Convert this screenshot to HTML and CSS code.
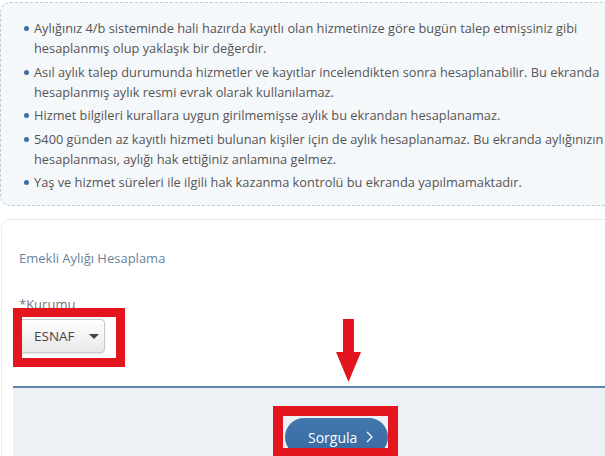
FILE: index.html
```html
<!DOCTYPE html>
<html lang="tr">
<head>
<meta charset="utf-8">
<title>Emekli Aylığı Hesaplama</title>
<link rel="stylesheet" href="styles.css">
</head>
<body>
<div class="page">
  <div class="info">
    <ul class="notes">
      <li>Aylığınız 4/b sisteminde hali hazırda kayıtlı olan hizmetinize göre bugün talep etmişsiniz gibi<br>hesaplanmış olup yaklaşık bir değerdir.</li>
      <li>Asıl aylık talep durumunda hizmetler ve kayıtlar incelendikten sonra hesaplanabilir. Bu ekranda<br>hesaplanmış aylık resmi evrak olarak kullanılamaz.</li>
      <li>Hizmet bilgileri kurallara uygun girilmemişse aylık bu ekrandan hesaplanamaz.</li>
      <li>5400 günden az kayıtlı hizmeti bulunan kişiler için de aylık hesaplanamaz. Bu ekranda aylığınızın<br>hesaplanması, aylığı hak ettiğiniz anlamına gelmez.</li>
      <li>Yaş ve hizmet süreleri ile ilgili hak kazanma kontrolü bu ekranda yapılmamaktadır.</li>
    </ul>
  </div>

  <div class="card">
    <div class="card-body">
      <h2 class="title">Emekli Aylığı Hesaplama</h2>
      <label class="field-label">*Kurumu</label>
      <div class="select">
        <span class="select-value">ESNAF</span>
        <span class="caret"></span>
      </div>
    </div>
    <div class="footer">
      <button class="btn">Sorgula
        <svg class="chev" width="7" height="12" viewBox="0 0 7 12"><path d="M1 1 L6 6 L1 11" fill="none" stroke="#fff" stroke-width="1.2"/></svg>
      </button>
    </div>
  </div>

  <div class="mark mark-select"></div>
  <div class="mark mark-btn"></div>
  <svg class="arrow" width="26" height="64" viewBox="0 0 26 64"><path d="M7 0 H18 V33 H25 L12.5 63 L0 33 H7 Z" fill="#e3161f"/></svg>
</div>
</body>
</html>
```

FILE: styles.css
```css
html, body {
  margin: 0;
  padding: 0;
  overflow: hidden;
  background: #fff;
}
body {
  font-family: "Open Sans", "Liberation Sans", sans-serif;
  width: 605px;
  height: 456px;
}
.page {
  position: relative;
  width: 605px;
  height: 456px;
  overflow: hidden;
}
.info {
  margin-top: 2px;
  width: 720px;
  border: 1px dashed #c3cad2;
  border-radius: 10px;
  background: #f5f8fb;
  padding: 15px 0 13px 0;
}
.notes {
  list-style: none;
  margin: 0;
  padding: 0 0 0 17px;
}
.notes li {
  position: relative;
  padding-left: 16px;
  font-size: 12.8px;
  line-height: 20px;
  color: #555;
  white-space: nowrap;
  margin-bottom: 3.6px;
}
.notes li:last-child { margin-bottom: 0; }
.notes li::before {
  content: "";
  position: absolute;
  left: 6px;
  top: 8px;
  width: 5px;
  height: 5px;
  border-radius: 50%;
  background: #3f6ea1;
}
.card {
  margin-top: 13px;
  margin-left: 1px;
  width: 720px;
  border-top: 1px solid #e4e7eb;
  border-left: 1px solid #eceef1;
  border-radius: 9px 0 0 0;
  background: #fff;
}
.card-body {
  padding: 29px 0 33px 17px;
}
.title {
  margin: 0;
  font-size: 13px;
  font-weight: normal;
  line-height: 18px;
  color: #6a84a0;
}
.field-label {
  display: block;
  margin-top: 28px;
  font-size: 13px;
  line-height: 18px;
  color: #777;
}
.select {
  margin-top: 6px;
  height: 32px;
  border: 1px solid #c9c9c9;
  border-radius: 4px;
  background: linear-gradient(#ffffff, #e8e8e8);
  box-shadow: 0 1px 2px rgba(0,0,0,0.12);
  display: flex;
  align-items: center;
  padding-left: 14px;
  box-sizing: content-box;
  width: 70px;
}
.select-value {
  font-size: 13.5px;
  color: #444;
}
.caret {
  margin-left: 14px;
  width: 0;
  height: 0;
  border-left: 5px solid transparent;
  border-right: 5px solid transparent;
  border-top: 5px solid #444;
}
.footer {
  margin-left: 11px;
  border-top: 2px solid #6286aa;
  background: #edf1f6;
  height: 80px;
  padding: 30px 0 0 272px;
}
.btn {
  display: flex;
  align-items: center;
  gap: 9px;
  height: 38px;
  padding: 0 15px 0 23px;
  border: none;
  border-radius: 19px;
  background: linear-gradient(#4277ad, #376aa0);
  color: #fff;
  font-family: "Open Sans", "Liberation Sans", sans-serif;
  font-size: 14px;
  cursor: pointer;
}
.chev { display: block; }
.mark {
  position: absolute;
  border: 9px solid #e3161f;
  box-sizing: border-box;
}
.mark-select {
  left: 13px;
  top: 308px;
  width: 112px;
  height: 59px;
}
.mark-btn {
  left: 273px;
  top: 406px;
  width: 125px;
  height: 50px;
  border-width: 10px;
  border-bottom-width: 8px;
}
.arrow {
  position: absolute;
  left: 336px;
  top: 319px;
}
```
